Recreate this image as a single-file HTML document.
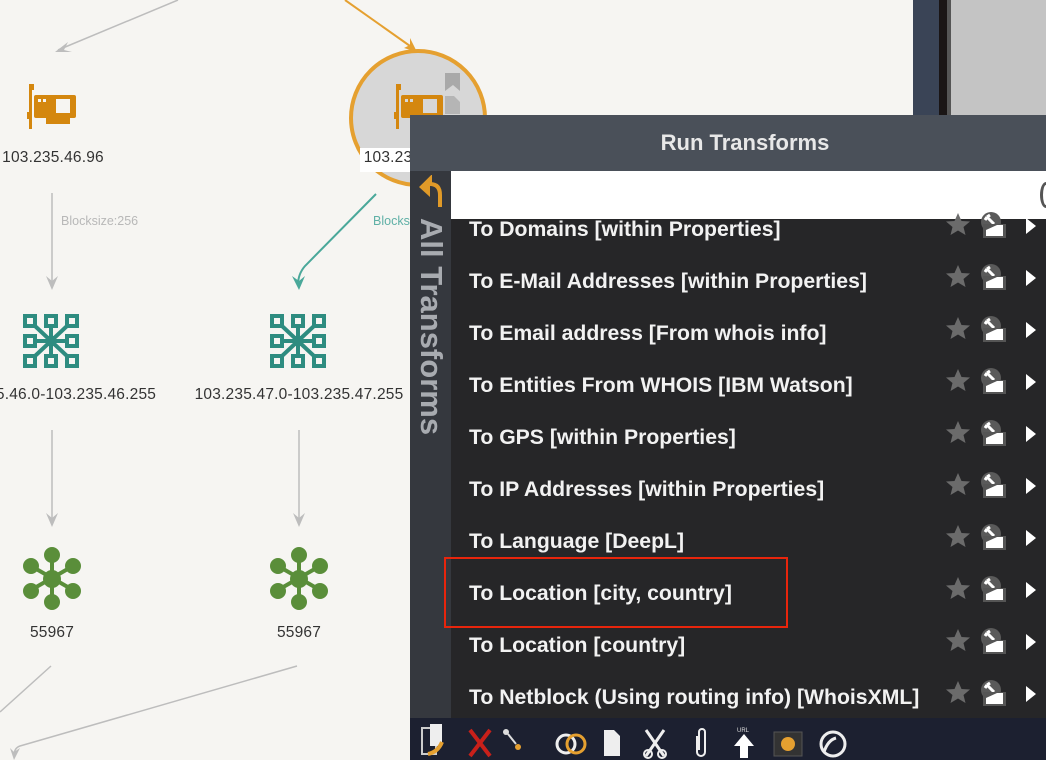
<!DOCTYPE html>
<html><head><meta charset="utf-8"><style>
*{margin:0;padding:0;box-sizing:border-box}
body{width:1046px;height:760px;overflow:hidden;background:#f6f5f2;position:relative;font-family:"Liberation Sans",Arial,sans-serif}
.abs{position:absolute}
.lbl{position:absolute;font-size:15.5px;color:#333;white-space:nowrap;transform:translateX(-50%);letter-spacing:0.2px}
.row{position:absolute;left:451px;width:595px;height:52px}
.row .t{position:absolute;left:18px;top:15px;font-size:21.2px;font-weight:bold;color:#f2f2f2;white-space:nowrap}
</style></head><body>

<svg class="abs" style="left:0;top:0" width="913" height="760">
 <line x1="178" y1="0" x2="58" y2="50" stroke="#bdbdbd" stroke-width="1.5"/>
 <path d="M55 52 L68 42 L64 50 L72 52 Z" fill="#bdbdbd"/>
 <line x1="345" y1="0" x2="410" y2="46" stroke="#e5a030" stroke-width="2"/>
 <path d="M417 52 L404 48 L410 45 L410 38 Z" fill="#e5a030"/>
 <line x1="52" y1="193" x2="52" y2="285" stroke="#bdbdbd" stroke-width="1.5"/>
 <path d="M52 290 L46 276 L52 281 L58 276 Z" fill="#bdbdbd"/>
 <text x="61" y="225" font-family="Liberation Sans" font-size="12.5" fill="#b8b8b8">Blocksize:256</text>
 <path d="M376 194 L305 266 Q298 274 298 285" stroke="#4aa89a" stroke-width="2" fill="none"/>
 <path d="M299 290 L292 276 L299 281 L305 276 Z" fill="#4aa89a"/>
 <text x="373" y="225" font-family="Liberation Sans" font-size="12.5" fill="#5fb0a6">Blocks</text>
 <line x1="52" y1="430" x2="52" y2="522" stroke="#bdbdbd" stroke-width="1.5"/>
 <path d="M52 527 L46 513 L52 518 L58 513 Z" fill="#bdbdbd"/>
 <line x1="299" y1="430" x2="299" y2="522" stroke="#bdbdbd" stroke-width="1.5"/>
 <path d="M299 527 L293 513 L299 518 L305 513 Z" fill="#bdbdbd"/>
 <line x1="51" y1="666" x2="0" y2="712" stroke="#bdbdbd" stroke-width="1.5"/>
 <path d="M297 666 L20 746 Q14 748 14 756" stroke="#bdbdbd" stroke-width="1.5" fill="none"/>
 <path d="M14 760 L10 748 L14 752 L20 748 Z" fill="#bdbdbd"/>
 <circle cx="418" cy="118" r="67" fill="#d7d7d7" stroke="#e5a030" stroke-width="4"/>
 <rect x="360" y="148" width="52" height="24" fill="#fff"/>
 <path d="M445 73 h15 v18 l-7 -6 l-8 6 Z" fill="#a9a9a9"/>
 <path d="M445 96 h9 l6 6 v12 h-15 Z" fill="#b5b5b5"/>
 <g id="nic" fill="#d4870f">
  <path d="M29 84 h5 v6 h-5 Z"/>
  <path d="M32 84 v45 h-3 v-10 h-2 v-7 h2 v-28 Z"/>
  <rect x="34" y="95" width="42" height="23" rx="2"/>
  <rect x="46" y="118" width="24" height="6"/>
 </g>
 <rect x="56" y="99" width="14" height="14" fill="#f6f5f2"/>
 <rect x="38" y="99" width="3" height="3" fill="#f6f5f2"/><rect x="43" y="99" width="3" height="3" fill="#f6f5f2"/>
 <use href="#nic" x="367" y="0"/>
 <rect x="423" y="99" width="14" height="14" fill="#d7d7d7"/>
 <rect x="405" y="99" width="3" height="3" fill="#d7d7d7"/><rect x="410" y="99" width="3" height="3" fill="#d7d7d7"/>
 <g id="nb" fill="none" stroke="#2e8c80" stroke-width="4">
  <rect x="25" y="316" width="10" height="10"/><rect x="46" y="316" width="10" height="10"/><rect x="67" y="316" width="10" height="10"/>
  <rect x="25" y="336" width="10" height="10"/><rect x="67" y="336" width="10" height="10"/>
  <rect x="25" y="356" width="10" height="10"/><rect x="46" y="356" width="10" height="10"/><rect x="67" y="356" width="10" height="10"/>
  <path d="M35 326 L67 356 M67 326 L35 356 M51 326 V356 M35 341 H67"/>
 </g>
 <rect x="46" y="336" width="10" height="10" fill="#2e8c80"/>
 <use href="#nb" x="247" y="0"/>
 <rect x="293" y="336" width="10" height="10" fill="#2e8c80"/>
 <g id="as" fill="#5a8e3a" stroke="#5a8e3a" stroke-width="4">
  <path d="M52 555 V602 M31 566 L73 590 M73 566 L31 590"/>
  <circle cx="52" cy="579" r="7"/>
  <circle cx="52" cy="555" r="6"/><circle cx="52" cy="602" r="6"/>
  <circle cx="31" cy="566" r="6"/><circle cx="73" cy="566" r="6"/>
  <circle cx="31" cy="591" r="6"/><circle cx="73" cy="591" r="6"/>
 </g>
 <use href="#as" x="247" y="0"/>
</svg>

<div class="lbl" style="left:53px;top:149px">103.235.46.96</div>
<div class="lbl" style="left:388px;top:149px">103.23</div>
<div class="lbl" style="left:76px;top:386px">5.46.0-103.235.46.255</div>
<div class="lbl" style="left:299px;top:386px">103.235.47.0-103.235.47.255</div>
<div class="lbl" style="left:52px;top:624px">55967</div>
<div class="lbl" style="left:299px;top:624px">55967</div>

<div class="abs" style="left:913px;top:0;width:26px;height:115px;background:#3a4456"></div>
<div class="abs" style="left:939px;top:0;width:8px;height:115px;background:#1a1515"></div>
<div class="abs" style="left:947px;top:0;width:4px;height:115px;background:#555"></div>
<div class="abs" style="left:951px;top:0;width:95px;height:115px;background:#c4c4c4"></div>

<div class="abs" style="left:410px;top:115px;width:636px;height:56px;background:#4a5059;color:#e8e8e8;font-size:22px;font-weight:bold;text-align:center;line-height:56px;padding-left:34px">Run Transforms</div>
<div class="abs" style="left:410px;top:171px;width:41px;height:547px;background:#35383e"></div>
<div class="abs" style="left:451px;top:171px;width:595px;height:547px;background:#262628"></div>
<div class="abs" style="left:451px;top:171px;width:595px;height:48px;background:#fff"></div>
<svg class="abs" style="left:416px;top:175px" width="30" height="36"><path d="M6 12 L14 4 L14 9 Q24 9 24 20 V32" stroke="#e09a28" stroke-width="4" fill="none"/><path d="M3 12 L14 2 L14 22 Z" fill="#e09a28"/></svg>
<div class="abs" style="left:415px;top:218px;width:240px;height:34px;transform-origin:0 0;transform:translate(33px,0) rotate(90deg);color:#a8abb0;font-size:31px;font-weight:bold;white-space:nowrap;line-height:34px">All Transforms</div>

<div class="row" style="top:203px"><div class="t">To Domains [within Properties]</div></div>
<div class="row" style="top:255px"><div class="t">To E-Mail Addresses [within Properties]</div></div>
<div class="row" style="top:307px"><div class="t">To Email address [From whois info]</div></div>
<div class="row" style="top:359px"><div class="t">To Entities From WHOIS [IBM Watson]</div></div>
<div class="row" style="top:411px"><div class="t">To GPS [within Properties]</div></div>
<div class="row" style="top:463px"><div class="t">To IP Addresses [within Properties]</div></div>
<div class="row" style="top:515px"><div class="t">To Language [DeepL]</div></div>
<div class="row" style="top:567px"><div class="t">To Location [city, country]</div></div>
<div class="row" style="top:619px"><div class="t">To Location [country]</div></div>
<div class="row" style="top:671px"><div class="t">To Netblock (Using routing info) [WhoisXML]</div></div>

<svg class="abs" style="left:940px;top:203px" width="106" height="515">
 <defs>
  <g id="ic">
   <path d="M18 10 L21.5 18 L30 18.5 L23.5 24 L25.5 32 L18 27.5 L10.5 32 L12.5 24 L6 18.5 L14.5 18 Z" fill="#6b6b6b"/>
   <circle cx="51" cy="19" r="10" fill="#5a5a5a"/>
   <path d="M47 14 L54 21 M47 14 l-2 3 M47 14 l3 -2" stroke="#fff" stroke-width="3"/>
   <rect x="43" y="21" width="23" height="14" fill="#555"/>
   <path d="M46 33 V27 L57 22 H63 V33 Z" fill="#fff"/>
   <path d="M86 15 L96 23 L86 31 Z" fill="#fff"/>
  </g>
 </defs>
 <use href="#ic" y="0"/><use href="#ic" y="52"/><use href="#ic" y="104"/><use href="#ic" y="156"/><use href="#ic" y="208"/>
 <use href="#ic" y="260"/><use href="#ic" y="312"/><use href="#ic" y="364"/><use href="#ic" y="416"/><use href="#ic" y="468"/>
</svg>
<div class="abs" style="left:1040px;top:182px;width:12px;height:26px;border:3px solid #555;border-radius:50%"></div>

<div class="abs" style="left:444px;top:557px;width:344px;height:71px;border:2px solid #e8250c"></div>

<div class="abs" style="left:410px;top:718px;width:636px;height:42px;background:#1c2030"></div>
<svg class="abs" style="left:410px;top:718px" width="636" height="42">
 <rect x="12" y="10" width="14" height="26" fill="none" stroke="#ccc" stroke-width="2"/>
 <rect x="20" y="6" width="12" height="22" fill="#eee"/>
 <path d="M18 36 Q28 34 32 24" stroke="#e5a030" stroke-width="4" fill="none"/>
 <path d="M60 12 L80 38 M80 12 L60 38" stroke="#c8201a" stroke-width="4"/>
 <circle cx="96" cy="14" r="3" fill="#ddd"/><path d="M98 16 L106 26" stroke="#ddd" stroke-width="2"/><circle cx="108" cy="29" r="3" fill="#e5a030"/>
 <circle cx="156" cy="26" r="9" fill="none" stroke="#eee" stroke-width="3"/><circle cx="166" cy="26" r="9" fill="none" stroke="#e5a030" stroke-width="3"/>
 <path d="M194 12 h10 l6 6 v20 h-16 Z" fill="#eee"/>
 <path d="M236 12 L254 38 M254 12 L236 38" stroke="#eee" stroke-width="3"/><circle cx="238" cy="36" r="4" fill="none" stroke="#eee" stroke-width="2"/><circle cx="252" cy="36" r="4" fill="none" stroke="#eee" stroke-width="2"/>
 <path d="M287 18 v16 a4 4 0 0 0 8 0 v-20 a3 3 0 0 0 -6 0 v18" fill="none" stroke="#eee" stroke-width="2"/>
 <text x="327" y="14" font-size="6" fill="#ddd" font-family="Liberation Sans">URL</text>
 <path d="M334 16 L344 28 H338 V40 H330 V28 H324 Z" fill="#fff"/>
 <rect x="364" y="14" width="28" height="24" fill="#333" stroke="#555"/><circle cx="378" cy="26" r="7" fill="#e5a030"/>
 <circle cx="423" cy="26" r="12" fill="none" stroke="#eee" stroke-width="3"/><path d="M414 34 Q418 22 426 20" stroke="#eee" stroke-width="3" fill="none"/>
</svg>
</body></html>
